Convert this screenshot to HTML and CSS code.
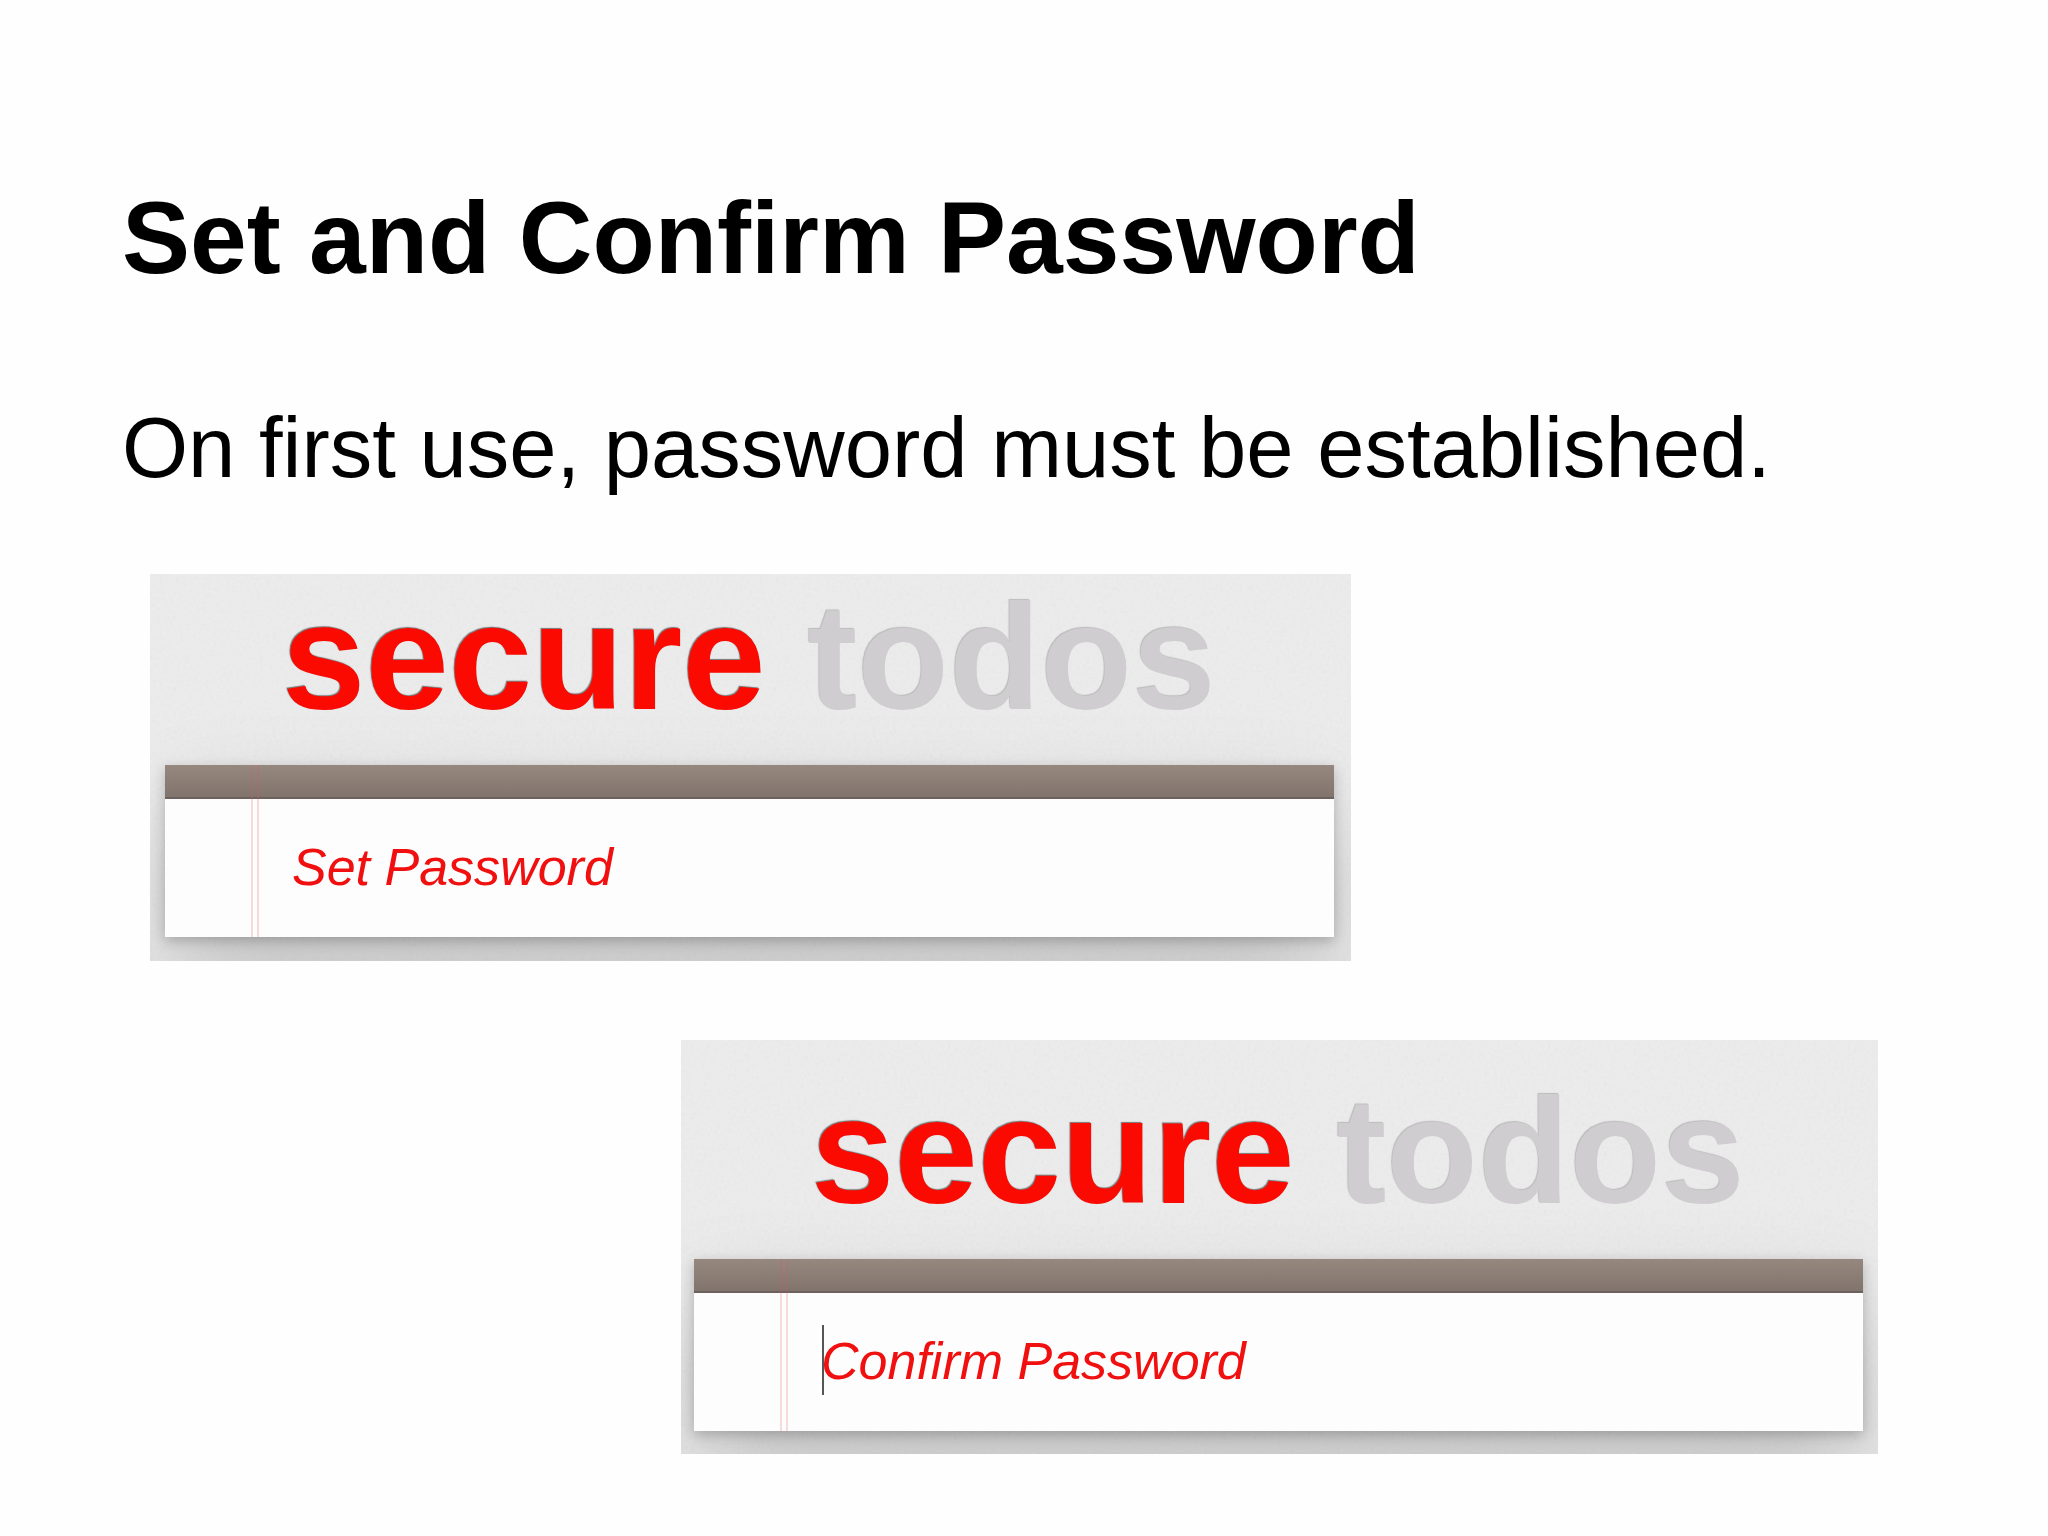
FILE: index.html
```html
<!DOCTYPE html>
<html lang="en">
<head>
  <meta charset="UTF-8">
  <meta name="viewport" content="width=device-width, initial-scale=1.0">
  <title>Set and Confirm Password</title>
  <link rel="stylesheet" href="styles.css">
</head>
<body>
  <main class="slide">
    <h1>Set and Confirm Password</h1>
    <p class="lead">On first use, password must be established.</p>

    <div class="shots">
      <section class="panel panel-set">
        <h2 class="logo"><span class="secure">secure</span> todos</h2>
        <form class="card">
          <div class="bar"></div>
          <input type="password" id="setPassword" placeholder="Set Password" aria-label="Set Password">
        </form>
      </section>

      <section class="panel panel-confirm">
        <h2 class="logo"><span class="secure">secure</span> todos</h2>
        <form class="card">
          <div class="bar"></div>
          <input type="password" id="confirmPassword" placeholder="Confirm Password" aria-label="Confirm Password">
          <span class="caret"></span>
        </form>
      </section>
    </div>
  </main>
</body>
</html>
```
FILE: styles.css
```css
* { box-sizing: border-box; }
body {
  margin: 0; background: #fefefe; color: #000;
  font-family: Arial, "Liberation Sans", sans-serif;
}
.slide { padding: 178px 0 84px; }
h1 {
  margin: 0 122px 100px; font-size: 102px; line-height: 120px;
  font-weight: bold;
}
.lead { margin: 0 122px 76px; font-size: 85px; line-height: 100px; }

.shots {
  display: flex; flex-direction: column; gap: 79px;
  padding: 0 170px 0 150px;
}
.panel {
  width: 100%; overflow: hidden;
  background-color: #edeced;
  /* fine paper grain */
  background-image: url("data:image/svg+xml,%3Csvg xmlns='http://www.w3.org/2000/svg' width='300' height='300'%3E%3Cfilter id='n'%3E%3CfeTurbulence type='fractalNoise' baseFrequency='.3' numOctaves='2' stitchTiles='stitch'/%3E%3CfeColorMatrix type='saturate' values='0'/%3E%3C/filter%3E%3Crect width='300' height='300' filter='url(%23n)' opacity='.08'/%3E%3C/svg%3E");
}
.panel-set { max-width: 1201px; padding: 3px 17px 24px 15px; }
.panel-confirm {
  max-width: 1197px; padding: 31px 15px 23px 13px;
  align-self: flex-end;
}

.logo {
  margin: 0 0 28px; padding-left: 117px;
  font-size: 150px; line-height: 160px; font-weight: bold;
  color: #cfcdcf; text-shadow: -1px -1px 1px rgba(0,0,0,0.2);
}
.secure { color: #fa0a00; text-shadow: -1px -1px 1px rgba(0,0,0,0.5); }

.card {
  position: relative; background: #fdfdfd;
  box-shadow: 0 4px 12px rgba(0,0,0,0.22), 0 52px 104px rgba(0,0,0,0.18);
}
/* double red margin line */
.card::before {
  content: ""; position: absolute; top: 0; bottom: 0; left: 86px;
  width: 4px; border: solid rgba(225,80,100,0.2); border-width: 0 2px;
}
.bar {
  height: 34px; border-bottom: 2px solid #6c615c;
  background: linear-gradient(#96887f, #81746c);
}
.card input {
  display: block; width: 100%; height: 138px;
  padding: 0 20px 2px 127px; border: none; outline: none;
  background: transparent; color: #f01010;
  font-family: inherit; font-size: 52px;
}
.card input::placeholder { color: #f01010; font-style: italic; opacity: 1; }
.caret {
  position: absolute; left: 128px; top: 66px;
  width: 2px; height: 70px; background: #555;
}
```
